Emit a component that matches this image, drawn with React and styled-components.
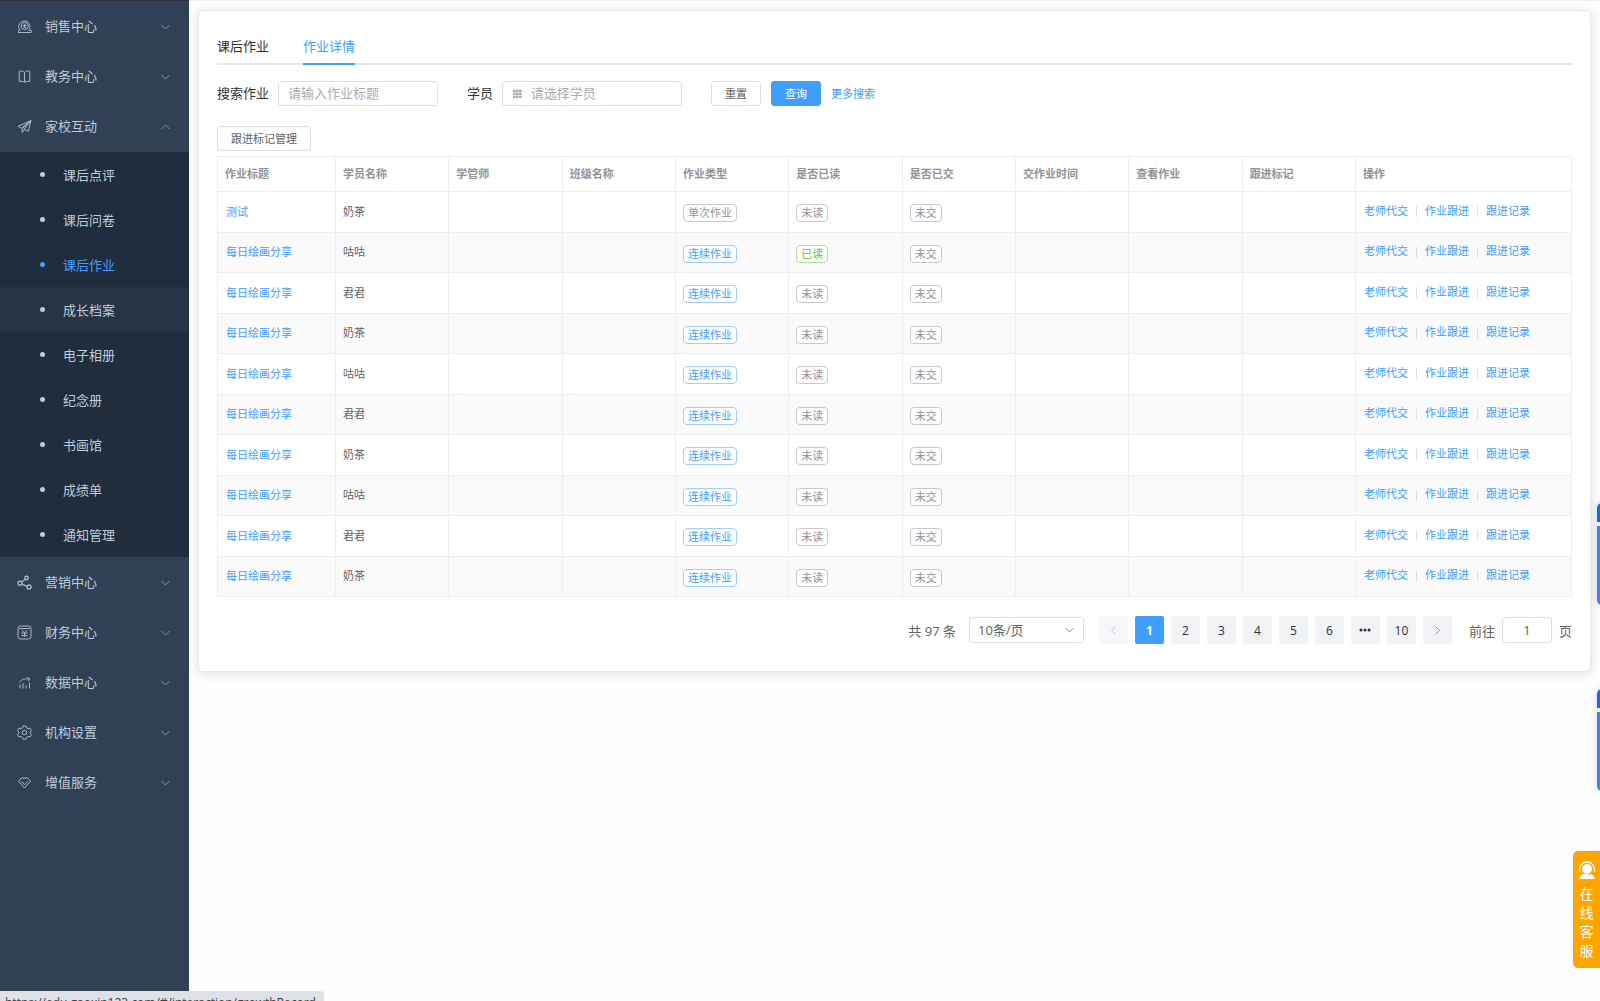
import React from 'react'
import styled, { createGlobalStyle } from 'styled-components'

const GlobalStyle = createGlobalStyle`
* {
    box-sizing:border-box;
}
body {
    margin:0;
    background-color:#fefefe;
    color:#303133;
    overflow:hidden;
}
body, button, input, select {
    font-family:"Open Sans", "Noto Sans CJK SC", sans-serif;
    font-size:13px;
}
a {
    text-decoration:none;
}
`

const menusTop = [
    { name: '销售中心', icon: 'sales' },
    { name: '教务中心', icon: 'book' },
    { name: '家校互动', icon: 'plane', open: true },
]

const subMenus = ['课后点评', '课后问卷', '课后作业', '成长档案', '电子相册', '纪念册', '书画馆', '成绩单', '通知管理']

const menusBottom = [
    { name: '营销中心', icon: 'share' },
    { name: '财务中心', icon: 'money' },
    { name: '数据中心', icon: 'chart' },
    { name: '机构设置', icon: 'setting' },
    { name: '增值服务', icon: 'diamond' },
]

const columns = ['作业标题', '学员名称', '学管师', '班级名称', '作业类型', '是否已读', '是否已交', '交作业时间', '查看作业', '跟进标记', '操作']

const rows = [
    { title: '测试', student: '奶茶', once: true },
    { title: '每日绘画分享', student: '咕咕', read: true },
    { title: '每日绘画分享', student: '君君' },
    { title: '每日绘画分享', student: '奶茶' },
    { title: '每日绘画分享', student: '咕咕' },
    { title: '每日绘画分享', student: '君君' },
    { title: '每日绘画分享', student: '奶茶' },
    { title: '每日绘画分享', student: '咕咕' },
    { title: '每日绘画分享', student: '君君' },
    { title: '每日绘画分享', student: '奶茶' },
]

const icons = {
    sales: (
        <>
            <path d="M3.600 11.900A5.700 5.700 0 1 1 12.300 10.500" />
            <path d="M3.200 9.800c-1.300.6-2 1.800-2 3.700h13v-2.200h-3" />
            <circle cx="7.700" cy="7" r="3.600" />
            <path d="M7.700 4.800v4.600M5.700 6.400h4M6.300 8.800l1.400-1.600 1.400 1.600" />
        </>
    ),
    book: <path d="M7.500 3.500v9.500M7.500 3.500C6.600 2.200 4.200 1.800 2.200 2.200v10.300c2-.3 4.200-.2 5.300.8 1.100-1 3.300-1.100 5.300-.8V2.200c-2-.4-4.400 0-5.300 1.300z" />,
    plane: <path d="M14 1.500L1 7.300l3.300 1.900zM14 1.500L5.200 9.800v3.700l2-2.700M14 1.500l-2.600 10.700-4.200-1.800L14 1.500" />,
    share: (
        <g strokeWidth="1.4">
            <circle cx="3" cy="8.300" r="2" />
            <circle cx="9.500" cy="3" r="1.700" />
            <circle cx="12" cy="12" r="2" />
            <path d="M4.500 7L8.300 4.200M4.900 9.100L10.100 11.300" />
        </g>
    ),
    money: (
        <>
            <rect x="1" y="1" width="13" height="13" rx="2.500" />
            <path d="M2 3.500h11M5 5.200l2.500 2.500L10 5.200M7.500 7.700V12M4.500 8h6M4.500 10.500h6" />
        </>
    ),
    chart: <path d="M2 7.500c3-3.500 6-4 10.500-3.500M10.200 2.300l2.700 1.700-2 2.200M3 13.500V9.500M6 13.500V8M9 13.500V10.500M12.500 13.500V7.500" />,
    setting: (
        <>
            <path d="M6 1h3l.6 1.900 1.500.8 2-.500 1.400 2.500L13.100 7v1.200l1.400 1.300-1.400 2.500-2-.500-1.500.900L9 14.200H6l-.600-1.800-1.500-.900-2 .500L.500 9.500 1.900 8.200V7L.500 5.700l1.400-2.500 2 .500 1.500-.8z" />
            <circle cx="7.500" cy="7.600" r="2.200" />
        </>
    ),
    diamond: (
        <>
            <path d="M4.200 3h6.600L13.500 6.200 7.500 13 1.500 6.200z" />
            <path d="M4.500 6.500l3 3.200 3-3.200" />
        </>
    ),
}

function Arrow({ dir }) {
    const d = {
        down: 'M1.500 4l4 4 4-4',
        up: 'M1.500 8l4-4 4 4',
        left: 'M7.500 1.500l-4 4 4 4',
        right: 'M3.500 1.500l4 4-4 4',
    }
    return (
        <ArrowSvg viewBox="0 0 11 11" aria-hidden="true">
            <path d={d[dir]} />
        </ArrowSvg>
    )
}

function Menu({ name, icon, open }) {
    return (
        <MenuButton aria-expanded={!!open}>
            <MenuIcon viewBox="0 0 15 15" aria-hidden="true">{icons[icon]}</MenuIcon>
            <MenuName>{name}</MenuName>
            <Arrow dir={open ? 'up' : 'down'} />
        </MenuButton>
    )
}

function Sidebar() {
    return (
        <SidebarNav>
            {menusTop.map((m) => <Menu key={m.name} {...m} />)}
            <SubMenu>
                {subMenus.map((name) => (
                    <li key={name}>
                        <SubMenuLink href="#" $active={name === '课后作业'} $hover={name === '成长档案'}>{name}</SubMenuLink>
                    </li>
                ))}
            </SubMenu>
            {menusBottom.map((m) => <Menu key={m.name} {...m} />)}
        </SidebarNav>
    )
}

function SearchForm() {
    return (
        <Form onSubmit={(e) => e.preventDefault()}>
            <Field>
                <label htmlFor="title">搜索作业</label>
                <InputBox $width={160}>
                    <input id="title" type="text" placeholder="请输入作业标题" />
                </InputBox>
            </Field>
            <Field>
                <label htmlFor="student">学员</label>
                <InputBox $width={180}>
                    <GridIcon viewBox="0 0 10 10" aria-hidden="true">
                        {[0, 3.5, 7].map((y) => [0, 3.5, 7].map((x) => (
                            <rect key={`${x}-${y}`} x={x} y={y} width="3" height="2.800" />
                        )))}
                    </GridIcon>
                    <input id="student" type="text" placeholder="请选择学员" />
                </InputBox>
            </Field>
            <FormButtons>
                <Button type="reset">重置</Button>
                <Button type="submit" $primary>查询</Button>
                <TextLink href="#">更多搜索</TextLink>
            </FormButtons>
        </Form>
    )
}

function HomeworkTable() {
    return (
        <Table>
            <colgroup>
                <col className="first" />
                <col span="9" />
                <col className="last" />
            </colgroup>
            <thead>
                <tr>
                    {columns.map((c) => <th key={c}>{c}</th>)}
                </tr>
            </thead>
            <tbody>
                {rows.map((row, i) => (
                    <tr key={i}>
                        <td><TextLink href="#">{row.title}</TextLink></td>
                        <td>{row.student}</td>
                        <td />
                        <td />
                        <td><Tag $type={row.once ? 'info' : 'primary'}>{row.once ? '单次作业' : '连续作业'}</Tag></td>
                        <td><Tag $type={row.read ? 'success' : 'info'}>{row.read ? '已读' : '未读'}</Tag></td>
                        <td><Tag $type="info">未交</Tag></td>
                        <td />
                        <td />
                        <td />
                        <td>
                            <Actions>
                                <TextLink href="#">老师代交</TextLink>
                                <Divider />
                                <TextLink href="#">作业跟进</TextLink>
                                <Divider />
                                <TextLink href="#">跟进记录</TextLink>
                            </Actions>
                        </td>
                    </tr>
                ))}
            </tbody>
        </Table>
    )
}

function Pagination() {
    return (
        <Pager>
            <span>共 97 条</span>
            <SelectBox>
                <select aria-label="每页条数" defaultValue="10">
                    <option value="10">10条/页</option>
                </select>
                <Arrow dir="down" />
            </SelectBox>
            <Pages>
                <PageButton disabled aria-label="上一页"><Arrow dir="left" /></PageButton>
                {[1, 2, 3, 4, 5, 6].map((n) => <PageButton key={n} $active={n === 1}>{n}</PageButton>)}
                <PageButton aria-label="更多">
                    <Dots viewBox="0 0 12 4" aria-hidden="true">
                        <circle cx="2" cy="2" r="1.500" />
                        <circle cx="6" cy="2" r="1.500" />
                        <circle cx="10" cy="2" r="1.500" />
                    </Dots>
                </PageButton>
                <PageButton>10</PageButton>
                <PageButton aria-label="下一页"><Arrow dir="right" /></PageButton>
            </Pages>
            <Jump>
                前往
                <input type="text" defaultValue="1" />
                页
            </Jump>
        </Pager>
    )
}

function App() {
    return (
        <Layout>
            <GlobalStyle />
            <Sidebar />
            <Main>
                <Card>
                    <Tabs>
                        <Tab href="#">课后作业</Tab>
                        <Tab href="#" $active>作业详情</Tab>
                    </Tabs>
                    <SearchForm />
                    <Button>跟进标记管理</Button>
                    <HomeworkTable />
                    <Pagination />
                </Card>
            </Main>
            <SidePanel $top={503} />
            <SidePanel $top={689} />
            <Service>
                <svg viewBox="0 0 18 18" width="18" height="18" aria-hidden="true">
                    <circle cx="9" cy="8" r="5" fill="#fff" />
                    <path d="M1.500 11V8.500a7.500 7.500 0 0 1 15 0V11" fill="none" stroke="#fff" strokeWidth="1.300" />
                    <path d="M1 18c.5-3 3-4.500 5-5h6c2.500.5 4.500 2 5 5z" fill="#fff" />
                    <path d="M16 10.500c-1 1.700-3 2.500-6 2.500" fill="none" stroke="#ffa500" />
                </svg>
                在线客服
            </Service>
            <StatusBar>https://edu.gaoxin123.com/#/interaction/growthRecord</StatusBar>
        </Layout>
    )
}

export default App


const Layout = styled.div`
display:flex;
min-height:100vh;
border-top:1px solid #f0f0f1;
`
const SidebarNav = styled.nav`
width:189px;
flex-shrink:0;
margin-top:-1px;
padding-top:1px;
background-color:#304156;
border-top:1px solid #2b2f3a;
`
const MenuButton = styled.button`
display:flex;
align-items:center;
width:100%;
height:50px;
padding:0 18px 2px 17px;
border:0;
background:none;
color:#bfcbd9;
text-align:left;
cursor:pointer;
`
const MenuIcon = styled.svg`
width:15px;
height:15px;
margin-right:13px;
fill:none;
stroke:#aab6c5;
stroke-width:1;
`
const MenuName = styled.span`
flex-grow:1;
padding-bottom:1px;
`
const ArrowSvg = styled.svg`
width:11px;
height:11px;
fill:none;
stroke:#909399;
stroke-width:1;
`
const SubMenu = styled.ul`
margin:0 0 1px;
padding:0;
list-style:none;
background-color:#1f2d3d;
`
const SubMenuLink = styled.a`
display:flex;
align-items:center;
gap:18px;
height:45px;
padding-left:40px;
color:${(p) => (p.$active ? '#409eff' : '#bfcbd9')};
background-color:${(p) => (p.$hover ? '#263445' : 'transparent')};
&::before {
    content:"";
    width:5px;
    height:5px;
    border-radius:50%;
    background-color:currentColor;
}
`
const Main = styled.main`
flex-grow:1;
min-width:0;
padding:9px;
`
const Card = styled.section`
padding:18px 18px 27px;
border:1px solid #e4e7ed;
border-radius:4px;
background-color:#fff;
box-shadow:0 2px 11px rgba(0, 0, 0, 0.12);
`
const Tabs = styled.div`
display:flex;
gap:34px;
margin-bottom:16px;
box-shadow:inset 0 -2px 0 #e4e7ed;
`
const Tab = styled.a`
height:36px;
line-height:35px;
color:${(p) => (p.$active ? '#409eff' : '#303133')};
box-shadow:${(p) => (p.$active ? 'inset 0 -2px 0 #409eff' : 'none')};
`
const Form = styled.form`
display:flex;
align-items:center;
gap:29px;
margin-bottom:20px;
`
const Field = styled.div`
display:flex;
align-items:center;
gap:9px;
label {
    padding-bottom:3px;
}
`
const InputBox = styled.div`
display:flex;
align-items:center;
width:${(p) => p.$width}px;
height:25px;
padding:0 9px;
border:1px solid #dcdfe6;
border-radius:3px;
background-color:#fff;
input {
    flex-grow:1;
    min-width:0;
    padding:0 0 2px;
    border:0;
    outline:none;
    background:none;
}
input::placeholder {
    color:#a8abb2;
}
`
const GridIcon = styled.svg`
width:10px;
height:10px;
margin:0 9px 0 1px;
fill:#a8abb2;
`
const FormButtons = styled.div`
display:flex;
align-items:center;
gap:10px;
`
const Button = styled.button`
height:25px;
padding:0 13px 2px;
border:1px solid ${(p) => (p.$primary ? '#409eff' : '#dcdfe6')};
border-radius:3px;
background-color:${(p) => (p.$primary ? '#409eff' : '#fff')};
color:${(p) => (p.$primary ? '#fff' : '#606266')};
font-size:11px;
cursor:pointer;
`
const TextLink = styled.a`
padding-bottom:2px;
color:#409eff;
font-size:11px;
`
const Table = styled.table`
width:100%;
margin-top:5px;
table-layout:fixed;
border-collapse:collapse;
font-size:11px;
line-height:18px;
.first {
    width:118px;
}
.last {
    width:216px;
}
th, td {
    padding:0 7px 1px;
    border:1px solid #ebeef5;
    text-align:left;
}
th {
    height:35px;
    color:#909399;
}
td {
    height:41px;
    color:#606266;
}
td > a {
    padding-left:1px;
}
tbody tr:nth-child(even) td {
    height:40px;
    background-color:#fafafa;
}
`
const tagColors = {
    info: ['#909399', '#c8c9cc'],
    primary: ['#409eff', '#a0cfff'],
    success: ['#67c23a', '#b3e19d'],
}
const Tag = styled.span`
display:inline-block;
height:18px;
margin-top:3px;
padding:0 4px;
border:1px solid ${(p) => tagColors[p.$type][1]};
border-radius:4px;
background-color:#fff;
color:${(p) => tagColors[p.$type][0]};
line-height:16px;
vertical-align:middle;
`
const Actions = styled.div`
display:flex;
align-items:center;
gap:8px;
padding-left:1px;
`
const Divider = styled.i`
width:1px;
height:11px;
background-color:#dcdfe6;
`
const Pager = styled.div`
display:flex;
align-items:center;
justify-content:flex-end;
gap:13px;
margin-top:19px;
color:#606266;
`
const SelectBox = styled.div`
position:relative;
width:115px;
height:26px;
select {
    width:100%;
    height:100%;
    padding:0 8px;
    border:1px solid #dcdfe6;
    border-radius:3px;
    background-color:#fff;
    color:#606266;
    appearance:none;
}
svg {
    position:absolute;
    right:9px;
    top:7px;
    pointer-events:none;
}
`
const Pages = styled.div`
display:flex;
gap:7px;
margin:0 4px 0 2px;
`
const PageButton = styled.button`
display:flex;
align-items:center;
justify-content:center;
width:29px;
height:28px;
padding:0;
border:0;
border-radius:2px;
background-color:${(p) => (p.$active ? '#409eff' : '#f0f2f5')};
color:${(p) => (p.$active ? '#fff' : '#303133')};
font-size:12px;
font-weight:${(p) => (p.$active ? 700 : 400)};
cursor:pointer;
&:disabled {
    background-color:#f5f7fa;
}
&:disabled svg {
    stroke:#c0c4cc;
}
`
const Dots = styled.svg`
width:12px;
height:4px;
fill:#303133;
`
const Jump = styled.label`
display:flex;
align-items:center;
gap:7px;
input {
    width:50px;
    height:26px;
    border:1px solid #dcdfe6;
    border-radius:3px;
    color:#606266;
    text-align:center;
}
`
const SidePanel = styled.div`
position:fixed;
top:${(p) => p.$top}px;
right:-37px;
width:40px;
height:102px;
border-radius:5px;
background:linear-gradient(#1268fa 19px, #f0f4ff 19px, #f0f4ff 23px, #4080ff 23px);
box-shadow:0 0 9px rgba(0, 0, 0, 0.15);
`
const Service = styled.button`
position:fixed;
top:851px;
right:0;
display:flex;
flex-direction:column;
align-items:center;
gap:5px;
width:27px;
padding:10px 6px 8px;
border:0;
border-radius:5px 0 0 5px;
background-color:#ffa500;
color:#fff;
font-size:14px;
line-height:19px;
word-break:break-all;
cursor:pointer;
`
const StatusBar = styled.div`
position:fixed;
left:0;
top:991px;
padding:0 8px 0 5px;
border-radius:0 4px 0 0;
background-color:#dee1e6;
color:#3c4043;
font-size:12px;
line-height:24px;
`
